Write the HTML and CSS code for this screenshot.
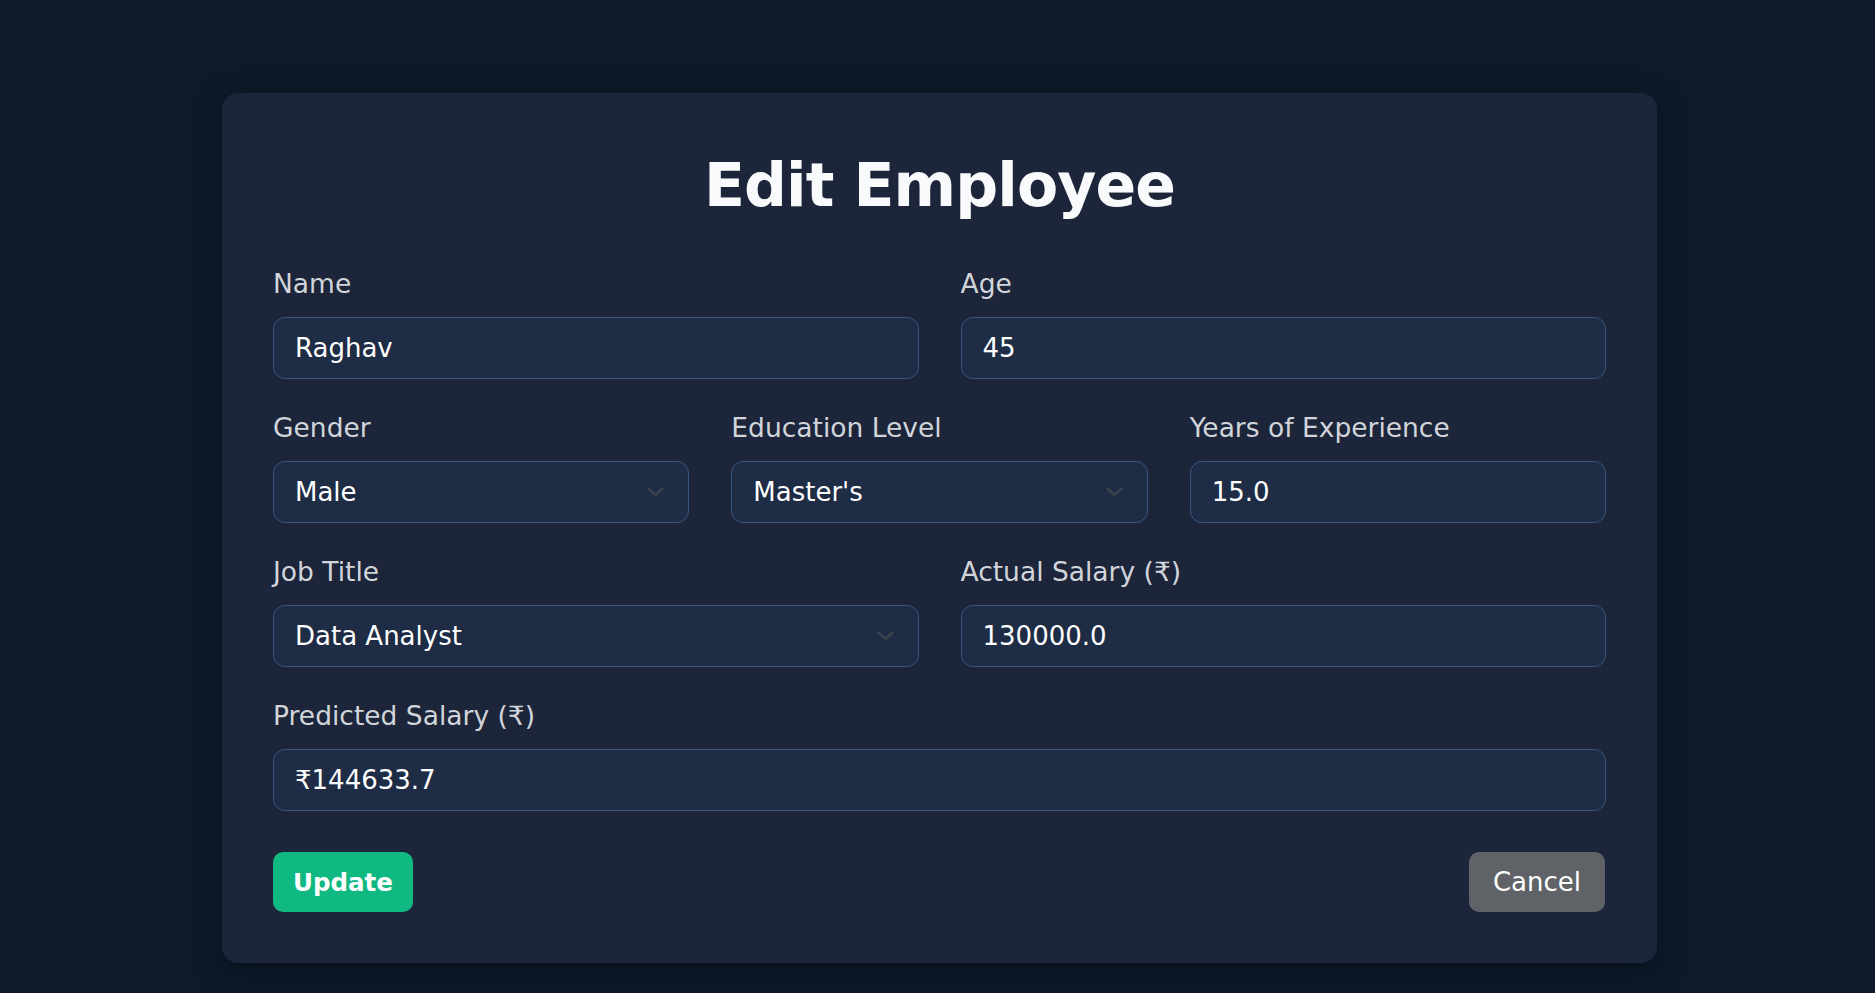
FILE: index.html
```html
<!DOCTYPE html>
<html lang="en">
<head>
<meta charset="utf-8">
<title>Edit Employee</title>
<link rel="stylesheet" href="styles.css">
</head>
<body>
<main class="page">
  <form class="card">
    <h1 class="title">Edit Employee</h1>
    <div class="rows">
      <div class="row cols-2">
        <div class="field">
          <label class="label">Name</label>
          <input class="control" type="text" value="Raghav">
        </div>
        <div class="field">
          <label class="label">Age</label>
          <input class="control" type="text" value="45">
        </div>
      </div>
      <div class="row cols-3">
        <div class="field">
          <label class="label">Gender</label>
          <div class="select-wrap">
            <select class="control select"><option>Male</option></select>
            <svg class="chev" width="17" height="10" viewBox="0 0 17 10"><path d="M1.5 1.5 L8.5 8 L15.5 1.5" fill="none" stroke="#3c424b" stroke-width="2.4" stroke-linecap="round" stroke-linejoin="round"/></svg>
          </div>
        </div>
        <div class="field">
          <label class="label">Education Level</label>
          <div class="select-wrap">
            <select class="control select"><option>Master's</option></select>
            <svg class="chev" width="17" height="10" viewBox="0 0 17 10"><path d="M1.5 1.5 L8.5 8 L15.5 1.5" fill="none" stroke="#3c424b" stroke-width="2.4" stroke-linecap="round" stroke-linejoin="round"/></svg>
          </div>
        </div>
        <div class="field">
          <label class="label">Years of Experience</label>
          <input class="control" type="text" value="15.0">
        </div>
      </div>
      <div class="row cols-2">
        <div class="field">
          <label class="label">Job Title</label>
          <div class="select-wrap">
            <select class="control select"><option>Data Analyst</option></select>
            <svg class="chev" width="17" height="10" viewBox="0 0 17 10"><path d="M1.5 1.5 L8.5 8 L15.5 1.5" fill="none" stroke="#3c424b" stroke-width="2.4" stroke-linecap="round" stroke-linejoin="round"/></svg>
          </div>
        </div>
        <div class="field">
          <label class="label">Actual Salary (₹)</label>
          <input class="control" type="text" value="130000.0">
        </div>
      </div>
      <div class="row cols-1">
        <div class="field">
          <label class="label">Predicted Salary (₹)</label>
          <input class="control" type="text" value="₹144633.7">
        </div>
      </div>
    </div>
    <div class="actions">
      <button type="button" class="btn btn-update">Update</button>
      <button type="button" class="btn btn-cancel">Cancel</button>
    </div>
  </form>
</main>
</body>
</html>
```
FILE: styles.css
```css
* { box-sizing: border-box; }
html, body { margin: 0; padding: 0; }
body {
  background: #0e1a2a;
  font-family: "DejaVu Sans", "Noto Sans", sans-serif;
  color: #f8fafc;
  min-height: 993px;
}
.page {
  padding-top: 93px;
  padding-bottom: 30px;
}
.card {
  width: 1435px;
  margin-left: 222px;
  background: #1c2539;
  border-radius: 16px;
  padding: 51px 51px 51px 51px;
  box-shadow: 0 8px 30px rgba(0, 0, 0, 0.35);
}
.title {
  margin: 5px 0 43px 0;
  font-size: 60px;
  line-height: 72px;
  font-weight: 700;
  letter-spacing: -0.9px;
  text-align: center;
  color: #f8fafc;
}
.rows {
  display: flex;
  flex-direction: column;
  gap: 29px;
}
.row {
  display: grid;
  column-gap: 42px;
}
.cols-1 { grid-template-columns: 1fr; }
.cols-2 { grid-template-columns: 1fr 1fr; }
.cols-3 { grid-template-columns: 1fr 1fr 1fr; }
.field {
  display: flex;
  flex-direction: column;
}
.label {
  font-size: 26.5px;
  line-height: 39px;
  color: #d1d5db;
  margin-bottom: 14px;
}
.control {
  width: 100%;
  height: 62px;
  background: #1e2c45;
  border: 1px solid #3b5682;
  border-radius: 12px;
  padding: 0 21px;
  font-family: "DejaVu Sans", "Noto Sans", sans-serif;
  font-size: 26px;
  color: #ffffff;
  outline: none;
}
.select-wrap {
  position: relative;
}
.select {
  appearance: none;
  -webkit-appearance: none;
  display: block;
}
.chev {
  position: absolute;
  right: 25px;
  top: 26px;
  pointer-events: none;
}
.actions {
  display: flex;
  justify-content: space-between;
  align-items: center;
  margin-top: 41px;
}
.btn {
  height: 60px;
  border: none;
  border-radius: 10px;
  font-family: "DejaVu Sans", "Noto Sans", sans-serif;
  color: #ffffff;
  cursor: pointer;
}
.btn-update {
  background: #10b981;
  font-size: 24.5px;
  font-weight: 700;
  padding: 0 20px;
}
.btn-cancel {
  background: #5f6368;
  font-size: 26px;
  padding: 0 24px;
  margin-right: 1px;
}
```
